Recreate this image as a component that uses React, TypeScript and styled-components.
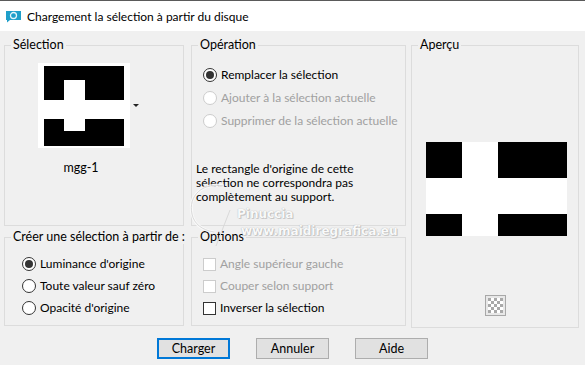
import styled, { createGlobalStyle } from 'styled-components';

const GlobalStyle = createGlobalStyle`
  html, body {
    margin: 0;
    padding: 0;
    background: #f0f0f0;
  }
  body {
    font-family: 'Segoe UI', Lato, 'Noto Sans', sans-serif;
    font-size: 12px;
    color: #000;
  }
  * {
    box-sizing: border-box;
  }
`;

const Window = styled.div`
  position: relative;
  width: 585px;
  height: 365px;
  background: #f0f0f0;
  overflow: hidden;
`;

const TitleBar = styled.header`
  height: 31px;
  background: #fff;
  border-top: 1px solid #5a5a5a;
  display: flex;
  align-items: center;
  padding-left: 5px;
  gap: 5px;
  font-size: 12px;
`;

const Body = styled.div`
  display: flex;
  padding: 7px 0 0 4px;
  gap: 5px;
`;

const LeftArea = styled.div`
  display: grid;
  grid-template-columns: 180px 215px;
  grid-template-rows: 188px 96px;
  column-gap: 7px;
  row-gap: 4px;
`;

const Group = styled.fieldset<{ $width?: number; $height?: number }>`
  margin: 0;
  padding: 0;
  min-width: 0;
  border: 1px solid #dcdcdc;
  ${(p) => (p.$width ? `width: ${p.$width}px;` : '')}
  ${(p) => (p.$height ? `height: ${p.$height}px;` : '')}
`;

const Legend = styled.legend`
  padding: 0 2px;
  margin-left: 6px;
  line-height: 14px;
  font-size: 12.5px;
  white-space: nowrap;
`;

const ThumbArea = styled.div`
  display: flex;
  flex-direction: column;
  padding: 11px 0 0 33px;
`;

const ThumbRow = styled.div`
  display: flex;
  align-items: center;
  gap: 3px;
`;

const Thumb = styled.div`
  width: 92px;
  height: 85px;
  background: #fff;
  display: flex;
  justify-content: center;
  padding-top: 3px;
`;

const DropArrow = styled.span`
  width: 0;
  height: 0;
  border-left: 3px solid transparent;
  border-right: 3px solid transparent;
  border-top: 3px solid #222;
`;

const ThumbName = styled.div`
  width: 86px;
  text-align: center;
  line-height: 16px;
  margin-top: 12px;
  font-size: 12.5px;
`;

const OptionList = styled.div<{ $gap: number; $top: number; $left: number }>`
  display: flex;
  flex-direction: column;
  gap: ${(p) => p.$gap}px;
  padding: ${(p) => p.$top}px 0 0 ${(p) => p.$left}px;
`;

const Option = styled.label<{ $disabled?: boolean }>`
  display: flex;
  align-items: center;
  gap: 4px;
  height: 14px;
  line-height: 14px;
  color: ${(p) => (p.$disabled ? '#a0a0a0' : '#000')};
  white-space: nowrap;
`;

const Radio = styled.span<{ $checked?: boolean; $disabled?: boolean }>`
  width: 14px;
  height: 14px;
  border-radius: 50%;
  border: 1px solid ${(p) => (p.$disabled ? '#cccccc' : '#333')};
  background: #fff;
  display: flex;
  align-items: center;
  justify-content: center;
  &::after {
    content: '';
    width: 8px;
    height: 8px;
    border-radius: 50%;
    background: ${(p) => (p.$checked ? '#333' : 'transparent')};
  }
`;

const Check = styled.span<{ $disabled?: boolean }>`
  width: 13px;
  height: 13px;
  border: 1px solid ${(p) => (p.$disabled ? '#cccccc' : '#333')};
  background: #fff;
`;

const Note = styled.p`
  margin: 34px 0 0 4px;
  line-height: 14px;
`;

const PreviewArea = styled.div`
  height: 100%;
  display: flex;
  flex-direction: column;
  align-items: center;
  padding: 90px 0 0 3px;
`;

const Checker = styled.div`
  margin-top: 59px;
  margin-left: -3px;
  width: 21px;
  height: 21px;
  border: 1px solid #a8a8a8;
  padding: 2px;
  background: #e8e8e8;
`;

const Buttons = styled.div`
  display: flex;
  justify-content: center;
  gap: 26px;
  padding: 10px 0 0 0;
`;

const Button = styled.button<{ $default?: boolean }>`
  width: 73px;
  height: 21px;
  padding: 0;
  background: #e1e1e1;
  border: ${(p) => (p.$default ? '2px solid #0078d7' : '1px solid #adadad')};
  font-family: inherit;
  font-size: 12.5px;
  color: #000;
`;

const Watermark = styled.div`
  position: absolute;
  left: 184px;
  top: 180px;
  pointer-events: none;
  opacity: 0.9;
`;

const WatermarkText = styled.div<{ $left: number; $top: number; $size: number }>`
  position: absolute;
  left: ${(p) => p.$left}px;
  top: ${(p) => p.$top}px;
  font-family: 'DejaVu Sans', sans-serif;
  font-weight: bold;
  font-size: ${(p) => p.$size}px;
  line-height: 1;
  color: #fbfbfb;
  white-space: nowrap;
  text-shadow: 0 0 1px #9a9a9a, 1px 1px 0 #c8c8c8;
`;

const AppIcon = () => (
  <svg width="17" height="13" viewBox="0 0 17 13">
    <path d="M1 1h15v9H5l-3 2.5V10H1z" fill="#1f9fca" />
    <circle cx="8.5" cy="5.5" r="3" fill="none" stroke="#e6f6fb" strokeWidth="1.3" />
  </svg>
);

const SelectionThumb = () => (
  <svg width="80" height="80" viewBox="0 0 80 80">
    <rect width="80" height="80" fill="#000" />
    <rect y="34" width="80" height="19" fill="#fff" />
    <rect x="20" y="14" width="21" height="51" fill="#fff" />
  </svg>
);

const PreviewImage = () => (
  <svg width="141" height="94" viewBox="0 0 141 94">
    <rect width="141" height="94" fill="#000" />
    <rect y="36" width="141" height="36" fill="#fff" />
    <rect x="36" width="36" height="94" fill="#fff" />
  </svg>
);

const CheckerIcon = () => (
  <svg width="15" height="15" viewBox="0 0 15 15">
    <rect width="15" height="15" fill="#fff" />
    {[0, 1, 2, 3, 4].flatMap((r) =>
      [0, 1, 2, 3, 4].map((c) =>
        (r + c) % 2 === 0 ? <rect key={`${r}-${c}`} x={c * 3} y={r * 3} width="3" height="3" fill="#a9a9a9" /> : null,
      ),
    )}
  </svg>
);

const App = () => {
  return (
    <Window>
      <GlobalStyle />
      <TitleBar>
        <AppIcon />
        <span>Chargement la sélection à partir du disque</span>
      </TitleBar>
      <Body>
        <LeftArea>
          <Group>
            <Legend>Sélection</Legend>
            <ThumbArea>
              <ThumbRow>
                <Thumb>
                  <SelectionThumb />
                </Thumb>
                <DropArrow />
              </ThumbRow>
              <ThumbName>mgg-1</ThumbName>
            </ThumbArea>
          </Group>
          <Group>
            <Legend>Opération</Legend>
            <OptionList $gap={9} $top={16} $left={11}>
              <Option>
                <Radio $checked />
                Remplacer la sélection
              </Option>
              <Option $disabled>
                <Radio $disabled />
                Ajouter à la sélection actuelle
              </Option>
              <Option $disabled>
                <Radio $disabled />
                Supprimer de la sélection actuelle
              </Option>
            </OptionList>
            <Note>
              Le rectangle d'origine de cette
              <br />
              sélection ne correspondra pas
              <br />
              complètement au support.
            </Note>
          </Group>
          <Group>
            <Legend>Créer une sélection à partir de :</Legend>
            <OptionList $gap={8} $top={13} $left={17}>
              <Option>
                <Radio $checked />
                Luminance d'origine
              </Option>
              <Option>
                <Radio />
                Toute valeur sauf zéro
              </Option>
              <Option>
                <Radio />
                Opacité d'origine
              </Option>
            </OptionList>
          </Group>
          <Group>
            <Legend>Options</Legend>
            <OptionList $gap={8} $top={13} $left={11}>
              <Option $disabled>
                <Check $disabled />
                Angle supérieur gauche
              </Option>
              <Option $disabled>
                <Check $disabled />
                Couper selon support
              </Option>
              <Option>
                <Check />
                Inverser la sélection
              </Option>
            </OptionList>
          </Group>
        </LeftArea>
        <Group $width={168} $height={290}>
          <Legend>Aperçu</Legend>
          <PreviewArea>
            <PreviewImage />
            <Checker>
              <CheckerIcon />
            </Checker>
          </PreviewArea>
        </Group>
      </Body>
      <Buttons>
        <Button $default>Charger</Button>
        <Button>Annuler</Button>
        <Button>Aide</Button>
      </Buttons>
      <Watermark>
        <svg width="60" height="70" viewBox="0 0 60 70">
          <path d="M40 6 C18 2 4 16 8 34 C10 44 18 50 30 52" fill="none" stroke="#fafafa" strokeWidth="3" />
          <path d="M40 6 C18 2 4 16 8 34 C10 44 18 50 30 52" fill="none" stroke="#cfcfcf" strokeWidth="0.8" />
          <path d="M46 30 L32 66" stroke="#d8d8d8" strokeWidth="1" />
        </svg>
        <WatermarkText $left={53} $top={28} $size={12}>
          Pinuccia
        </WatermarkText>
        <WatermarkText $left={57} $top={45} $size={12}>
          www.maidiregrafica.eu
        </WatermarkText>
      </Watermark>
    </Window>
  );
};

export default App;
